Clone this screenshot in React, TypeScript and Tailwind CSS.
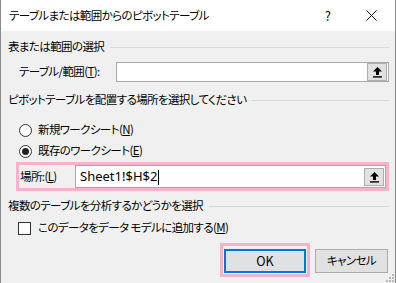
import React from 'react';

const font = { fontFamily: '"Noto Sans CJK JP", "Noto Sans", sans-serif', fontFeatureSettings: '"palt"' };

const PickButton: React.FC = () => (
  <div className="w-[20px] h-[18px] mr-[1px] bg-[#e1e1e1] border border-[#adadad] flex items-center justify-center">
    <svg width="11" height="12" viewBox="0 0 11 12">
      <path d="M5.5 1 L10 5.5 H7 V9 H4 V5.5 H1 Z" fill="#000" />
      <rect x="1" y="10.2" width="9" height="1.4" fill="#000" />
    </svg>
  </div>
);

const Section: React.FC<{ title: string; className?: string }> = ({ title, className }) => (
  <div className={'flex items-center h-[20px] ' + (className ?? '')}>
    <span className="text-[11.5px] tracking-[-0.6px] text-black whitespace-nowrap">{title}</span>
    <div className="flex-1 ml-[6px] border-t border-[#d9d9d9]" />
  </div>
);

const Radio: React.FC<{ checked?: boolean }> = ({ checked }) => (
  <div className="w-[13px] h-[13px] rounded-full border border-[#333] bg-white flex items-center justify-center">
    {checked && <div className="w-[7px] h-[7px] rounded-full bg-[#222]" />}
  </div>
);

export default function App() {
  return (
    <div className="w-[396px] h-[283px] bg-[#f0f0f0] border-x border-[#8a8a8a] relative overflow-hidden" style={font}>
      {/* Title bar */}
      <div className="h-[31px] bg-white flex items-center pl-[8px] pr-[14px]">
        <span className="text-[11.5px] tracking-[-0.6px] text-black flex-1">テーブルまたは範囲からのピボットテーブル</span>
        <span className="text-[13px] text-black mr-[35px]">?</span>
        <svg width="11" height="11" viewBox="0 0 11 11" className="mr-[4px]">
          <path d="M0.5 0.5 L10.5 10.5 M10.5 0.5 L0.5 10.5" stroke="#111" strokeWidth="1" />
        </svg>
      </div>

      <div className="pl-[7px] pr-[6px]">
        <Section title="表または範囲の選択" className="mt-[6px]" />
        <div className="flex items-center mt-[5px] h-[20px]">
          <span className="text-[11.5px] tracking-[-0.6px] text-black w-[108px] pl-[11px]">
            テーブル/範囲(<span className="underline">T</span>):
          </span>
          <div className="flex-1 h-[20px] bg-white border border-[#a9a9a9] flex items-center justify-end">
            <PickButton />
          </div>
        </div>

        <Section title="ピボットテーブルを配置する場所を選択してください" className="mt-[8px]" />
        <div className="flex items-center mt-[10px] h-[20px] pl-[11px] gap-[6px]">
          <Radio />
          <span className="text-[11.5px] tracking-[-0.6px] text-black">
            新規ワークシート(<span className="underline">N</span>)
          </span>
        </div>
        <div className="flex items-center mt-[1px] h-[20px] pl-[11px] gap-[6px]">
          <Radio checked />
          <span className="text-[11.5px] tracking-[-0.6px] text-black">
            既存のワークシート(<span className="underline">E</span>)
          </span>
        </div>
        <div className="mt-[1px] ml-[8px] h-[29px] border-[3px] border-[#f5b3cb] flex items-center">
          <span className="text-[11.5px] tracking-[-0.6px] text-black w-[56px] pl-[1px]">
            場所:(<span className="underline">L</span>)
          </span>
          <div className="flex-1 h-[23px] bg-white border border-[#a9a9a9] flex items-center justify-between">
            <span className="text-[13px] text-black pl-[4px]" style={{ fontFamily: '"Noto Sans", sans-serif' }}>
              Sheet1!$H$2<span className="inline-block w-[1px] h-[15px] bg-black align-middle ml-[1px]" />
            </span>
            <PickButton />
          </div>
        </div>

        <Section title="複数のテーブルを分析するかどうかを選択" className="mt-[5px]" />
        <div className="flex items-center mt-[2px] h-[20px] pl-[10px] gap-[7px]">
          <div className="w-[13px] h-[13px] border border-[#333] bg-white" />
          <span className="text-[11.5px] tracking-[-0.6px] text-black">
            このデータをデータ モデルに追加する(<span className="underline">M</span>)
          </span>
        </div>

        <div className="flex justify-end items-center mt-[5px] mr-[1px] gap-[5px]">
          <div className="border-[3px] border-[#f5b3cb] p-[1px]">
            <button className="w-[82px] h-[24px] bg-[#e1e1e1] border-2 border-[#0078d7] text-[12.5px] text-black">
              OK
            </button>
          </div>
          <button className="w-[73px] h-[24px] bg-[#e1e1e1] border border-[#adadad] text-[11.5px] tracking-[-0.6px] text-black mt-[1px]">
            キャンセル
          </button>
        </div>
      </div>

      {/* Resize grip */}
      <svg width="10" height="10" viewBox="0 0 10 10" className="absolute right-[1px] bottom-[1px]">
        {[[8, 2], [8, 5], [8, 8], [5, 5], [5, 8], [2, 8]].map(([x, y], i) => (
          <rect key={i} x={x} y={y} width="2" height="2" fill="#b8b8b8" />
        ))}
      </svg>
    </div>
  );
}
